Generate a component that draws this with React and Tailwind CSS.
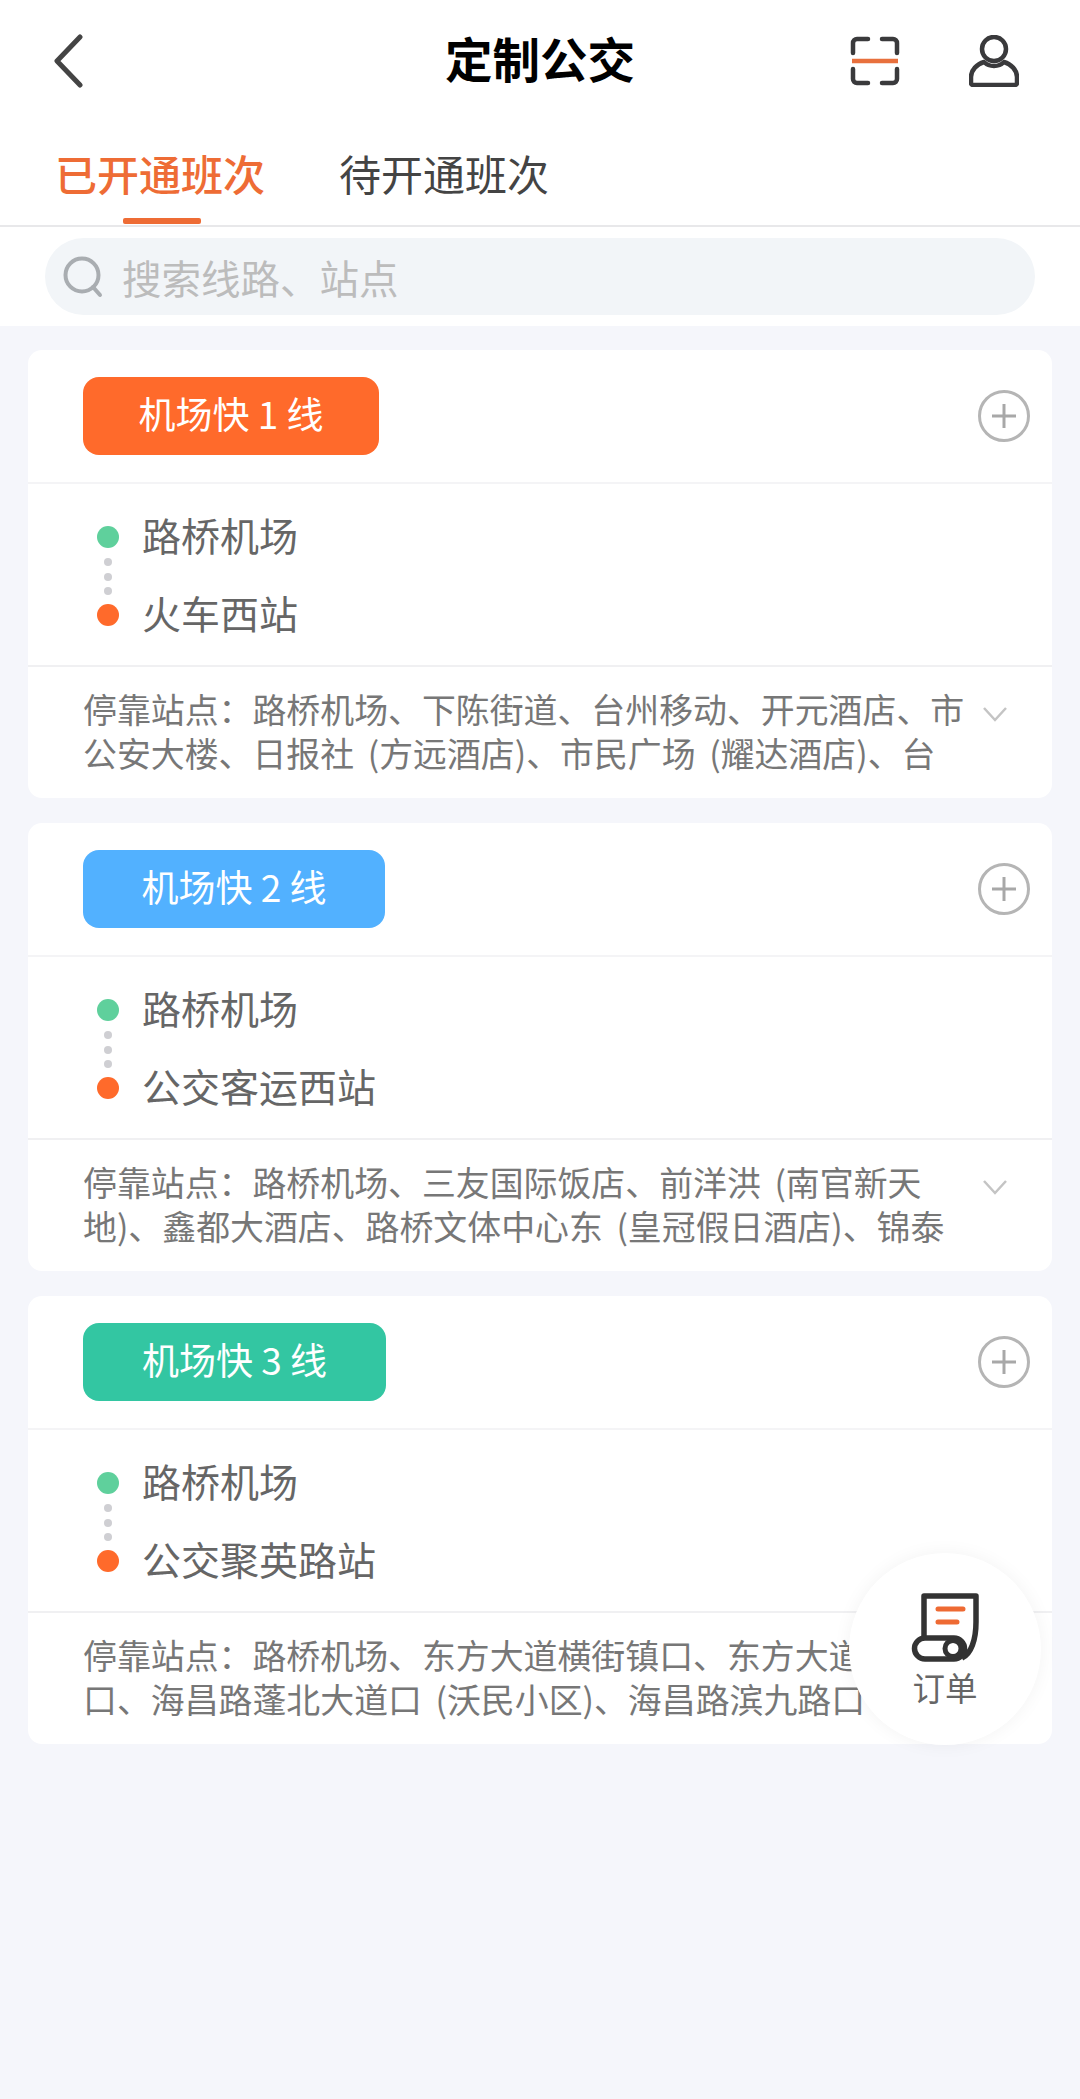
import React from 'react';

const lines = [
    {
        id: 1,
        name: '机场快 1 线',
        pillClass: 'w-[296px] bg-[#ff6a2b]',
        to: '火车西站',
        stops: [
            '停靠站点：路桥机场、下陈街道、台州移动、开元酒店、市',
            '公安大楼、日报社 (方远酒店)、市民广场 (耀达酒店)、台',
        ],
    },
    {
        id: 2,
        name: '机场快 2 线',
        pillClass: 'w-[302px] bg-[#52b1ff]',
        to: '公交客运西站',
        stops: [
            '停靠站点：路桥机场、三友国际饭店、前洋洪 (南官新天',
            '地)、鑫都大酒店、路桥文体中心东 (皇冠假日酒店)、锦泰',
        ],
    },
    {
        id: 3,
        name: '机场快 3 线',
        pillClass: 'w-[303px] bg-[#33c6a2]',
        to: '公交聚英路站',
        stops: [
            '停靠站点：路桥机场、东方大道横街镇口、东方大道',
            '口、海昌路蓬北大道口 (沃民小区)、海昌路滨九路口',
        ],
    },
];

function BackIcon() {
    return (
        <svg width="30" height="54" viewBox="0 0 30 54" fill="none">
            <path d="M27 3 4 27l23 24" stroke="#444" strokeWidth="5" strokeLinecap="round" strokeLinejoin="round" />
        </svg>
    );
}

function ScanIcon() {
    return (
        <svg width="50" height="50" viewBox="0 0 50 50" fill="none">
            <g stroke="#3a3a3c" strokeWidth="4.5" strokeLinecap="round" strokeLinejoin="round">
                <path d="M18 3H7a4 4 0 0 0-4 4v10" />
                <path d="M32 3h11a4 4 0 0 1 4 4v10" />
                <path d="M18 47H7a4 4 0 0 1-4-4V33" />
                <path d="M32 47h11a4 4 0 0 0 4-4V33" />
            </g>
            <path d="M2 25h46" stroke="#e8703d" strokeWidth="4.5" />
        </svg>
    );
}

function UserIcon() {
    return (
        <svg width="50" height="52" viewBox="0 0 50 52" fill="none">
            <circle cx="25" cy="14" r="12" stroke="#3a3a3c" strokeWidth="4.5" />
            <path
                d="M4 50h42a2 2 0 0 0 2-2v-6c0-7-6-13-13-15-3 3-6 4-10 4s-7-1-10-4C8 29 2 35 2 42v6a2 2 0 0 0 2 2z"
                stroke="#3a3a3c"
                strokeWidth="4.5"
                strokeLinejoin="round"
            />
        </svg>
    );
}

function SearchIcon() {
    return (
        <svg width="40" height="42" viewBox="0 0 40 42" fill="none">
            <circle cx="19" cy="19" r="16.5" stroke="#a9adb1" strokeWidth="4" />
            <path d="m30 31 7 8" stroke="#a9adb1" strokeWidth="4" strokeLinecap="round" />
        </svg>
    );
}

function PlusIcon() {
    return (
        <svg width="52" height="52" viewBox="0 0 52 52" fill="none">
            <circle cx="26" cy="26" r="24.5" stroke="#b5b5b5" strokeWidth="3" />
            <path d="M26 14v24M14 26h24" stroke="#a8a8a8" strokeWidth="3" />
        </svg>
    );
}

function ChevronIcon() {
    return (
        <svg width="26" height="18" viewBox="0 0 26 18" fill="none">
            <path d="m2 3 11 12L24 3" stroke="#c4c4c4" strokeWidth="2.5" />
        </svg>
    );
}

function OrderIcon() {
    return (
        <svg width="68" height="70" viewBox="0 0 68 70" fill="none">
            <path
                d="M13 45V4h52v26c0 18-5 32-14 36"
                stroke="#333"
                strokeWidth="5.5"
                strokeLinejoin="round"
            />
            <rect x="3.5" y="46" width="50" height="21" rx="10.5" stroke="#333" strokeWidth="5.5" fill="#fff" />
            <circle cx="42" cy="56.5" r="8" stroke="#333" strokeWidth="5" fill="#fff" />
            <path d="M27 17h25M27 30h19" stroke="#ee6a33" strokeWidth="5" strokeLinecap="round" />
        </svg>
    );
}

function LineCard({ line }) {
    return (
        <div className="bg-white rounded-[14px] h-[448px] flex flex-col overflow-hidden">
            <div className="h-[134px] shrink-0 flex items-center justify-between pl-[55px] pr-[22px] border-b-2 border-[#f4f4f6]">
                <div className={`h-[78px] pb-[4px] rounded-[16px] flex items-center justify-center text-white text-[37px] whitespace-pre ${line.pillClass}`}>
                    {line.name}
                </div>
                <PlusIcon />
            </div>

            <div className="h-[183px] shrink-0 flex items-center pl-[69px] gap-[23px] border-b-2 border-[#f0f0f2]">
                <div className="w-[22px] mt-[2px] flex flex-col items-center">
                    <div className="w-[22px] h-[22px] rounded-full bg-[#5fd09c]" />
                    <div className="w-[8px] h-[8px] rounded-full bg-[#cfcfd3] mt-[10px]" />
                    <div className="w-[8px] h-[8px] rounded-full bg-[#cfcfd3] mt-[7px]" />
                    <div className="w-[8px] h-[8px] rounded-full bg-[#cfcfd3] mt-[6px]" />
                    <div className="w-[22px] h-[22px] rounded-full bg-[#ff6a2b] mt-[9px]" />
                </div>
                <div className="mb-[3px] text-[39px] leading-[78px] text-[#666]">
                    <div>路桥机场</div>
                    <div>{line.to}</div>
                </div>
            </div>

            <div className="flex-1 flex pl-[55px] pr-[44px] pt-[20px]">
                <div className="flex-1 text-[33.9px] leading-[44px] [word-spacing:6px] text-[#777] whitespace-nowrap">
                    {line.stops.map(text => (
                        <div key={text}>{text}</div>
                    ))}
                </div>
                <div className="mt-[18px]">
                    <ChevronIcon />
                </div>
            </div>
        </div>
    );
}

function App() {
    return (
        <div className="relative w-[1080px] min-h-[2099px] bg-[#f5f6fb] [font-family:'Noto_Sans_CJK_SC',sans-serif]">
            <div className="bg-white h-[326px]">
                {/* Nav bar */}
                <div className="relative h-[120px] flex items-center justify-between pl-[53px] pr-[61px] pt-[2px]">
                    <BackIcon />
                    <h1 className="absolute left-0 right-0 pb-[6px] text-center text-[47.5px] font-bold text-black">定制公交</h1>
                    <div className="flex items-center gap-[69px]">
                        <ScanIcon />
                        <UserIcon />
                    </div>
                </div>

                {/* Tabs */}
                <div className="h-[107px] flex pl-[55px] gap-[74px] border-b-2 border-[#e8e8ea] text-[42px] leading-[106px]">
                    <div className="relative font-medium text-[#ee6c35]">
                        已开通班次
                        <div className="absolute left-[68px] bottom-[1px] w-[78px] h-[6px] rounded-[2px] bg-[#ee6c35]" />
                    </div>
                    <div className="text-[#444]">待开通班次</div>
                </div>

                {/* Search */}
                <div className="px-[45px] pt-[11px]">
                    <div className="h-[77px] rounded-full bg-[#f2f5f8] flex items-center pl-[18px] gap-[19px]">
                        <SearchIcon />
                        <span className="text-[39.5px] text-[#bcbcbc]">搜索线路、站点</span>
                    </div>
                </div>
            </div>

            <div className="flex flex-col gap-[25px] px-[28px] pt-[24px]">
                {lines.map(line => (
                    <LineCard key={line.id} line={line} />
                ))}
            </div>

            {/* Floating order button */}
            <div className="absolute left-[849px] top-[1553px] w-[192px] h-[192px] rounded-full bg-white shadow-[0_0_18px_rgba(0,0,0,0.05)] flex flex-col items-center pt-[39px]">
                <OrderIcon />
                <span className="text-[32.5px] leading-[40px] text-[#666] mt-[5px]">订单</span>
            </div>
        </div>
    );
}

export default App;
